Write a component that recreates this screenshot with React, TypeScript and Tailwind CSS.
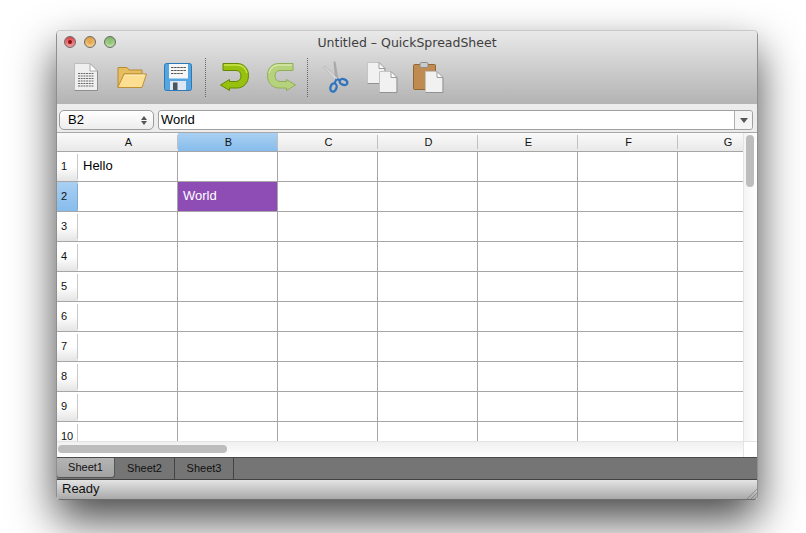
import React from 'react'

const columns = ['A', 'B', 'C', 'D', 'E', 'F', 'G']
const rows = [1, 2, 3, 4, 5, 6, 7, 8, 9, 10]

const NewIcon = () => (
  <svg width="24" height="28" viewBox="0 0 24 28">
    <path d="M0.5 0.5H16L23.5 8V27.5H0.5Z" fill="#efefef" stroke="#bdbdbd" />
    <path d="M0.5 27.5H23.5V8" fill="none" stroke="#8f8f8f" />
    <path d="M16 0.5V8H23.5Z" fill="#fff" stroke="#a8a8a8" />
    {[10.5, 13, 15.5, 18, 20.5, 23].map((y) => (
      <path key={y} d="M4 0H20" transform={`translate(0 ${y})`} stroke="#6a6a6a" strokeWidth="1" strokeDasharray="2 0.7" />
    ))}
  </svg>
)

const OpenIcon = () => (
  <svg width="30" height="22" viewBox="0 0 30 22">
    <path d="M1 21V1.5H10L12 4H25V8H7L3 21Z" fill="#e6bd5f" stroke="#b98c33" />
    <path d="M7 8H29.5L25 21.5H0.8Z" fill="#fcdf92" stroke="#bf8f34" />
    <path d="M8 9.2H27.5" stroke="#fff0c0" />
  </svg>
)

const SaveIcon = () => (
  <svg width="28" height="28" viewBox="0 0 28 28">
    <rect x="0.5" y="0.5" width="27" height="27" rx="2" fill="#55a6e0" stroke="#2a78b8" />
    <rect x="5" y="1" width="19" height="14.5" fill="#f6f6f6" />
    <path d="M7 4.5H22M7 7.5H22M7 10.5H19" stroke="#555" strokeWidth="1" strokeDasharray="2.5 0.6" />
    <path d="M6 27V18H22V27Z" fill="#dde8f4" />
    <rect x="9" y="19.5" width="4.5" height="7.5" fill="#4a5560" />
  </svg>
)

const ArrowIcon = ({ flip, light }: { flip?: boolean; light?: boolean }) => (
  <svg width="30" height="28" viewBox="0 0 30 28" className={flip ? '-scale-x-100' : ''}>
    <path
      d="M3 0.5H17C24 0.5 28.5 5.5 28.5 12.5C28.5 20 23.5 25 17 25H9.5V27.5L0.5 22L9.5 16.5V18.5H16C19 18.5 21 16 21 13C21 9.5 19 7.5 16 7.5H3Z"
      fill={light ? '#b7d27c' : '#98c00e'}
      stroke={light ? '#8fae58' : '#638a02'}
    />
    <path d="M4 2H17C22 2 26 5.5 27 10" fill="none" stroke={light ? '#d6e8a8' : '#cbe44e'} strokeWidth="1.3" />
  </svg>
)

const CutIcon = () => (
  <svg width="26" height="32" viewBox="0 0 26 32">
    <path d="M10.5 0.5L12.5 0.5L15.5 19L12.5 20Z" fill="#a8a8a8" />
    <path d="M0.5 6L2 5L15.5 18L13 20.5Z" fill="#d4d4d4" stroke="#a8a8a8" strokeWidth="0.5" />
    <ellipse cx="10.5" cy="26.5" rx="3" ry="4.2" fill="none" stroke="#2f74bd" strokeWidth="2.3" transform="rotate(18 10.5 26.5)" />
    <ellipse cx="20.5" cy="21" rx="4" ry="2.8" fill="none" stroke="#2f74bd" strokeWidth="2.3" transform="rotate(22 20.5 21)" />
    <path d="M13.5 18L11.5 22.5M14 18L17 19.5" stroke="#2f74bd" strokeWidth="2" />
  </svg>
)

const SHEET = 'M0.5 0.5H12L18 6.5V21.5H0.5Z'

const Sheet = ({ x, y }: { x: number; y: number }) => (
  <g transform={`translate(${x} ${y})`}>
    <path d={SHEET} fill="#f1f1f1" stroke="#c4c4c4" />
    <path d="M0.5 21.5H18V6.5" fill="none" stroke="#929292" />
    <path d="M12 0.5V6.5H18Z" fill="#fff" stroke="#9c9c9c" />
  </g>
)

const CopyIcon = () => (
  <svg width="31" height="31" viewBox="0 0 31 31">
    <Sheet x={0} y={0} />
    <Sheet x={12} y={9} />
  </svg>
)

const PasteIcon = () => (
  <svg width="31" height="31" viewBox="0 0 31 31">
    <rect x="0.5" y="2.5" width="22" height="25" rx="1" fill="#c08b50" stroke="#936633" />
    <rect x="7" y="0.5" width="8" height="5" rx="1.5" fill="#cacaca" stroke="#8c8c8c" />
    <Sheet x={12} y={9} />
  </svg>
)

const Light = ({ color, dot }: { color: string; dot: string }) => (
  <div className={`w-3 h-3 rounded-full border border-[#6b6b6b] flex items-center justify-center bg-gradient-to-b ${color}`}>
    <div className={`w-1 h-1 rounded-full ${dot}`} />
  </div>
)

const Divider = () => <div className="h-[39px] border-l border-dotted border-[#666]" />

const Resize = () => (
  <svg width="11" height="11" viewBox="0 0 11 11" className="absolute right-0 bottom-0">
    <path d="M1 11L11 1M5 11L11 5M8.5 11L11 8.5" stroke="#777" strokeWidth="1" strokeDasharray="1 0.5" />
  </svg>
)

export default function App() {
  return (
    <div className="w-[806px] h-[533px] bg-white overflow-hidden pt-[30px] pl-[56px] font-['Liberation_Sans',sans-serif]">
      <div className="relative w-[702px] h-[470px] flex flex-col rounded-t-[5px] rounded-b-[4px] overflow-hidden border-x border-[#8f8f8f] shadow-[0_20px_44px_rgba(0,0,0,0.72)]">
        {/* title bar and toolbar */}
        <div className="h-[74px] shrink-0 relative bg-gradient-to-b from-[#e9e9e9] to-[#b3b3b3] border-t border-[#c9c9c9]">
          <div className="flex items-center gap-2 absolute left-[7px] top-[5px]">
            <Light color="from-[#d8454a] to-[#f29a9a]" dot="bg-[#8c1018]" />
            <Light color="from-[#dc9c40] to-[#f5cf8a]" dot="bg-[#e2a650]" />
            <Light color="from-[#7db564] to-[#bde0a6]" dot="bg-[#8fc477]" />
          </div>
          <div className="text-center text-[12.5px] leading-[24px] text-[#3e3e3e] font-['DejaVu_Sans',sans-serif]">
            Untitled – QuickSpreadSheet
          </div>
          <div className="flex items-center h-[44px] pl-[17px]">
            <div className="flex"><NewIcon /></div>
            <div className="ml-[19px] flex"><OpenIcon /></div>
            <div className="ml-[17px] flex"><SaveIcon /></div>
            <div className="ml-[13px]"><Divider /></div>
            <div className="ml-[14px] flex"><ArrowIcon /></div>
            <div className="ml-[16px] flex"><ArrowIcon flip light /></div>
            <div className="ml-[11px]"><Divider /></div>
            <div className="ml-[15px] flex"><CutIcon /></div>
            <div className="ml-[18px] flex"><CopyIcon /></div>
            <div className="ml-[15px] flex"><PasteIcon /></div>
          </div>
        </div>

        {/* cell name and formula */}
        <div className="h-[29px] shrink-0 bg-[#ececec] flex items-start pt-[6px] pl-[2px] pr-[4px] gap-[4px] border-b border-[#a8a8a8]">
          <div className="w-[95px] h-[20px] bg-gradient-to-b from-white to-[#ededed] border border-[#9d9d9d] rounded-[5px] flex items-center justify-between pl-[8px] pr-[6px] text-[13px] text-black">
            <span>B2</span>
            <span className="flex flex-col gap-[1px]">
              <span className="w-0 h-0 border-x-[3px] border-x-transparent border-b-[4px] border-b-[#555]" />
              <span className="w-0 h-0 border-x-[3px] border-x-transparent border-t-[4px] border-t-[#555]" />
            </span>
          </div>
          <div className="flex-1 h-[20px] bg-white border border-[#a0a0a0] rounded-[3px] flex items-center">
            <span className="flex-1 pl-[2px] text-[13px] text-black">World</span>
            <div className="w-[18px] h-full border-l border-[#b0b0b0] flex items-center justify-center bg-[#f4f4f4] rounded-r-[3px]">
              <span className="w-0 h-0 border-x-[4px] border-x-transparent border-t-[5px] border-t-[#555]" />
            </div>
          </div>
        </div>

        {/* sheet grid */}
        <div className="h-[308px] shrink-0 flex bg-white overflow-hidden">
          <div className="w-[686px] shrink-0 overflow-hidden">
            <div className="flex h-[19px] border-b border-[#a6a6a6]">
              <div className="w-[21px] shrink-0 bg-gradient-to-b from-[#fafafa] to-[#e9e9e9]" />
              {columns.map((c) => (
                <div
                  key={c}
                  className={`w-[100px] shrink-0 flex items-center text-[11px] text-[#111] ${
                    c === 'B'
                      ? 'bg-gradient-to-b from-[#a9d0f2] to-[#86bcec]'
                      : 'bg-gradient-to-b from-[#fafafa] to-[#e9e9e9]'
                  }`}
                >
                  <span className={`flex-1 text-center ${c === 'G' ? '' : 'pl-[2px]'}`}>{c}</span>
                  {c !== 'G' && <div className="w-px h-[14px] bg-[#c0c0c0]" />}
                </div>
              ))}
            </div>
            {rows.map((r) => (
              <div key={r} className="flex h-[30px] border-b border-[#a6a6a6]">
                <div
                  className={`w-[21px] shrink-0 flex items-center text-[11px] text-[#111] ${
                    r === 2
                      ? 'bg-gradient-to-b from-[#a9d0f2] to-[#86bcec]'
                      : 'bg-gradient-to-b from-white via-white to-[#e4e4e4]'
                  }`}
                >
                  <span className="flex-1 pl-[4px]">{r}</span>
                  <div className={`w-px h-[25px] ${r === 2 ? 'bg-[#7fa9d0]' : 'bg-[#c8c8c8]'}`} />
                </div>
                {columns.map((c) => {
                  const selected = c === 'B' && r === 2
                  return (
                    <div
                      key={c}
                      className={`w-[100px] shrink-0 border-r border-[#a6a6a6] flex items-center pl-[5px] pb-[2px] text-[13px] ${
                        selected ? 'bg-[#8e4db5] text-white' : 'text-black'
                      }`}
                    >
                      {c === 'A' && r === 1 ? 'Hello' : selected ? 'World' : ''}
                    </div>
                  )
                })}
              </div>
            ))}
          </div>
          <div className="w-[14px] shrink-0 bg-gradient-to-r from-[#f4f4f4] to-white border-l border-[#e4e4e4] pl-[2px] pt-[2px]">
            <div className="w-[8px] h-[52px] rounded-full bg-[#bdbdbd]" />
          </div>
        </div>

        {/* horizontal scroll */}
        <div className="h-[16px] shrink-0 flex bg-gradient-to-b from-[#f0f0f0] to-white border-t border-[#e4e4e4]">
          <div className="w-[686px] pl-[1px] pt-[3px]">
            <div className="w-[169px] h-[8px] rounded-full bg-[#bdbdbd]" />
          </div>
          <div className="flex-1 border-l border-[#e4e4e4] bg-white" />
        </div>

        {/* sheet tabs */}
        <div className="h-[23px] shrink-0 bg-[#757575] border-y border-[#414141] flex text-[11px] text-[#111] border-t-[#4a4a4a]">
          <div className="w-[58px] h-[20px] flex items-center justify-center bg-gradient-to-b from-[#b4b4b4] to-[#a2a2a2] rounded-b-[3px] border-r border-b border-[#555]">Sheet1</div>
          <div className="w-[60px] flex items-center justify-center border-r border-[#444]">Sheet2</div>
          <div className="w-[59px] flex items-center justify-center border-r border-[#444]">Sheet3</div>
        </div>

        {/* status bar */}
        <div className="relative flex-1 bg-gradient-to-b from-[#e4e4e4] to-[#a9a9a9] border-b border-[#6e6e6e] pl-[5px] text-[13px] leading-[18px] text-[#111]">
          Ready
          <Resize />
        </div>
      </div>
    </div>
  )
}
